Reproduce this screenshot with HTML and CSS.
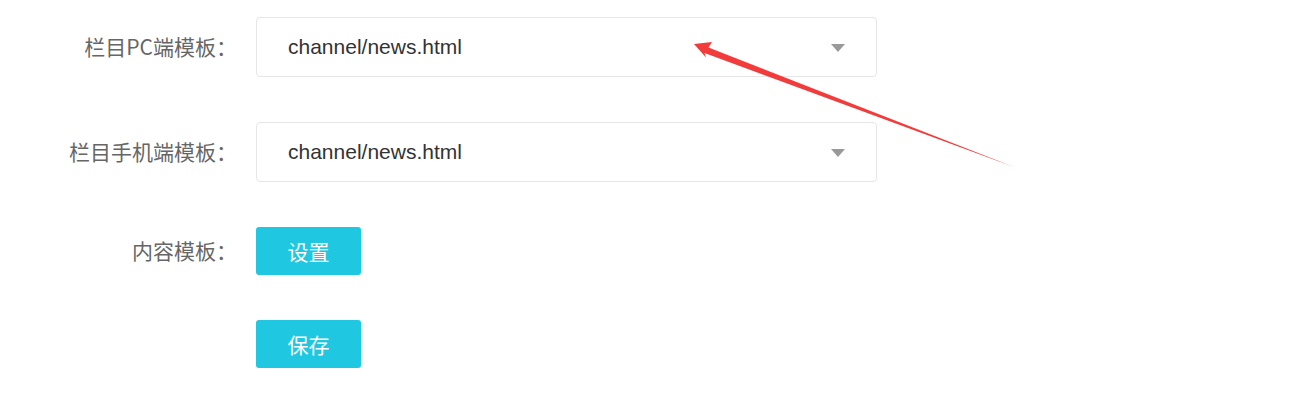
FILE: index.html
```html
<!DOCTYPE html>
<html lang="zh">
<head>
<meta charset="utf-8">
<link rel="stylesheet" href="styles.css">
</head>
<body>
<div class="form">
  <div class="row">
    <label class="label">栏目PC端模板：</label>
    <div class="select"><span class="value">channel/news.html</span><span class="caret"></span></div>
  </div>
  <div class="row">
    <label class="label">栏目手机端模板：</label>
    <div class="select"><span class="value">channel/news.html</span><span class="caret"></span></div>
  </div>
  <div class="row">
    <label class="label">内容模板：</label>
    <button class="btn">设置</button>
  </div>
  <div class="row">
    <span class="label"></span>
    <button class="btn">保存</button>
  </div>
</div>
<svg class="annot" width="1289" height="413" viewBox="0 0 1289 413">
  <polygon points="694,44 712,42 708.5,47.5 1014,167 704.5,53 706,57.5" fill="#f23c3c"/>
</svg>
</body>
</html>
```
FILE: styles.css
```css
html, body {
  margin: 0;
  padding: 0;
  background: #fff;
}
body {
  font-family: "Liberation Sans", "Noto Sans CJK SC", sans-serif;
  position: relative;
  width: 1289px;
  height: 413px;
  overflow: hidden;
}
.form {
  display: flex;
  flex-direction: column;
  gap: 45px;
  padding-top: 17px;
}
.row {
  display: flex;
  align-items: center;
}
.label {
  width: 237px;
  text-align: right;
  font-family: "Noto Sans CJK SC", sans-serif;
  font-size: 21px;
  line-height: 28px;
  color: #666;
  margin-right: 19px;
  margin-bottom: 2px;
  flex: none;
}
.select {
  height: 58px;
  border: 1px solid #e6e6e6;
  border-radius: 4px;
  display: flex;
  align-items: center;
  justify-content: space-between;
  padding: 0 31px 0 31px;
  box-sizing: content-box;
  width: 557px;
}
.value {
  font-size: 21px;
  color: #333;
}
.caret {
  width: 0;
  height: 0;
  border-left: 7px solid transparent;
  border-right: 7px solid transparent;
  border-top: 8px solid #999;
  margin-top: 1px;
}
.btn {
  width: 105px;
  height: 48px;
  border: none;
  border-radius: 3px;
  background: #20c7e0;
  color: #fff;
  font-family: "Noto Sans CJK SC", sans-serif;
  font-size: 21px;
  padding: 0;
}
.annot {
  position: absolute;
  left: 0;
  top: 0;
  pointer-events: none;
}
```
